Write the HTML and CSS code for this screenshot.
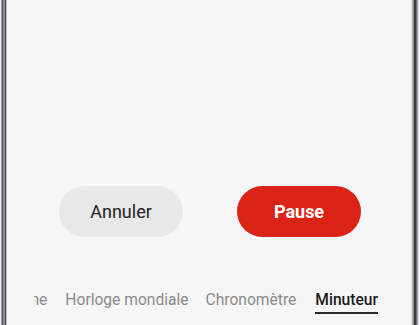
FILE: index.html
```html
<!DOCTYPE html>
<html lang="fr">
<head>
<meta charset="utf-8">
<link rel="stylesheet" href="styles.css">
</head>
<body>
<div class="phone">
  <div class="edge-left"></div>
  <div class="screen">
    <div class="spacer"></div>
    <div class="actions">
      <button class="btn btn-cancel">Annuler</button>
      <button class="btn btn-pause">Pause</button>
    </div>
    <div class="tabs-viewport">
      <div class="tabs">
        <span class="tab">Alarme</span>
        <span class="tab">Horloge mondiale</span>
        <span class="tab tab-chrono">Chronomètre</span>
        <span class="tab tab-timer active">Minuteur</span>
      </div>
    </div>
  </div>
  <div class="edge-right"></div>
</div>
</body>
</html>
```
FILE: styles.css
```css
html, body {
  margin: 0;
  padding: 0;
  background: #ffffff;
}
body {
  width: 420px;
  height: 325px;
  overflow: hidden;
  font-family: Roboto, "Noto Sans", sans-serif;
}
.phone {
  display: flex;
  height: 325px;
}
.edge-left {
  flex: 0 0 7px;
  background: linear-gradient(to right, #eeeeee 0 1px, #9c9ca4 1px 2px, #505056 2px 3px, #8e8e98 3px 5px, #3e3e44 5px 6px, #c4c4c8 6px 7px);
}
.edge-right {
  flex: 0 0 9px;
  background: linear-gradient(to right, #dcdcdc 0 1px, #b4b4b8 1px 2px, #8a8a90 2px 3px, #3a3a3e 3px 5px, #6e6e74 5px 6px, #a0a0a6 6px 7px, #d8d8d8 7px 8px, #ffffff 8px 9px);
}
.screen {
  flex: 1;
  min-width: 0;
  background: #f6f6f6;
  display: flex;
  flex-direction: column;
}
.spacer {
  height: 186px;
}
.actions {
  display: flex;
  justify-content: center;
  gap: 54px;
  padding-left: 2px;
}
.btn {
  width: 124px;
  height: 51px;
  border: none;
  border-radius: 26px;
  font-family: Roboto, "Noto Sans", sans-serif;
  font-size: 18px;
  padding: 0;
}
.btn-cancel {
  background: #e8e8e8;
  color: #222222;
}
.btn-pause {
  background: #dc2318;
  color: #ffffff;
  font-weight: 700;
}
.tabs-viewport {
  margin-top: 53px;
  margin-left: 27px;
  overflow: hidden;
}
.tabs {
  display: flex;
  justify-content: flex-end;
  gap: 18px;
  padding-right: 33px;
  white-space: nowrap;
}
.tab {
  flex-shrink: 0;
  font-size: 15.6px;
  line-height: 21px;
  color: #8a8a8a;
  padding-bottom: 3px;
}
.tab-chrono {
  margin-left: -1px;
}
.tab-timer {
  margin-left: 1px;
}
.tab.active {
  color: #1a1a1a;
  font-weight: 500;
  border-bottom: 2px solid #2a2a2a;
  padding-bottom: 1px;
}
```
